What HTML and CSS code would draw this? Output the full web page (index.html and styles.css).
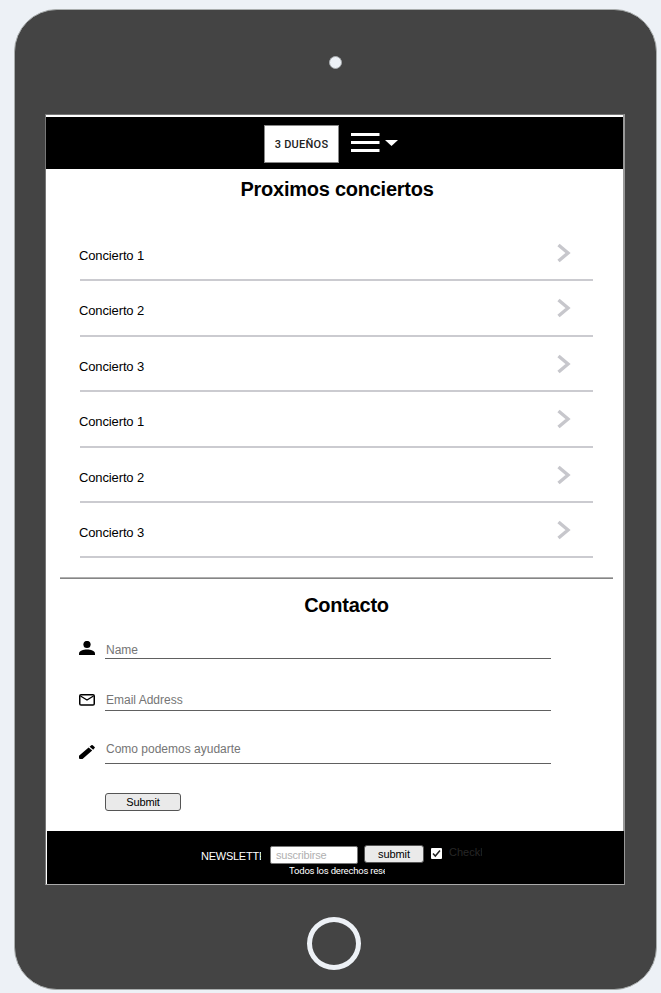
FILE: index.html
```html
<!DOCTYPE html>
<html lang="es">
<head>
<meta charset="utf-8">
<title>3 Dueños</title>
<link rel="stylesheet" href="styles.css">
</head>
<body>
<div class="tablet">
  <div class="bezel-top"><span class="camera"></span></div>
  <main class="screen">
    <header class="topbar">
      <span class="logo">3 DUEÑOS</span>
      <svg class="menu" width="48" height="20" viewBox="0 0 48 20"><path d="M0 1.500h28.500M0 9.500h28.500M0 17.500h28.500" stroke="#fff" stroke-width="3"/><path d="M34 7h13l-6.500 6z" fill="#fff"/></svg>
    </header>
    <section class="concerts">
      <h2>Proximos conciertos</h2>
      <ul class="list">
        <li><span>Concierto 1</span><svg class="chevron" viewBox="0 0 14 20"><path d="M1.5 2l9.5 8-9.5 8"/></svg></li>
        <li><span>Concierto 2</span><svg class="chevron" viewBox="0 0 14 20"><path d="M1.5 2l9.5 8-9.5 8"/></svg></li>
        <li><span>Concierto 3</span><svg class="chevron" viewBox="0 0 14 20"><path d="M1.5 2l9.5 8-9.5 8"/></svg></li>
        <li><span>Concierto 1</span><svg class="chevron" viewBox="0 0 14 20"><path d="M1.5 2l9.5 8-9.5 8"/></svg></li>
        <li><span>Concierto 2</span><svg class="chevron" viewBox="0 0 14 20"><path d="M1.5 2l9.5 8-9.5 8"/></svg></li>
        <li><span>Concierto 3</span><svg class="chevron" viewBox="0 0 14 20"><path d="M1.5 2l9.5 8-9.5 8"/></svg></li>
      </ul>
    </section>
    <section class="contact">
      <h2>Contacto</h2>
      <div class="field name">
        <svg width="16" height="14" viewBox="0 0 16 14"><circle cx="8" cy="3.5" r="3.6"/><path d="M0 14v-1.5C0 9.900 4.500 8.500 8 8.500s8 1.400 8 4V14z"/></svg>
        <span>Name</span>
      </div>
      <div class="field email">
        <svg width="16" height="12" viewBox="0 0 16 12"><rect x=".75" y=".75" width="14.500" height="10.200" rx="1.300" fill="none" stroke="#000" stroke-width="1.500"/><path d="M1.500 2L8 6l6.500-4" fill="none" stroke="#000" stroke-width="1.300"/></svg>
        <span>Email Address</span>
      </div>
      <div class="field message">
        <svg width="16" height="14" viewBox="0 0 16 14"><path d="M0 10.800L9.600 2.400l3.600 3.100L3.500 14H1Q0 14 0 13zM10.600 1.700L12.300.3Q13 -.2 13.700.3l1.900 1.600q.6.600 0 1.200L14.200 4.700z"/></svg>
        <span>Como podemos ayudarte</span>
      </div>
      <button class="send">Submit</button>
    </section>
    <footer class="footer">
      <div class="newsletter">
        <span class="news-label">NEWSLETTER</span>
        <span class="news-input">suscribirse</span>
        <button class="news-button">submit</button>
        <span class="check"><svg width="9" height="9" viewBox="0 0 9 9"><path d="M1 4.500l2.300 2.500L8 1.500" fill="none" stroke="#222" stroke-width="1.500"/></svg></span>
        <span class="check-label">Checkbox</span>
      </div>
      <p class="rights">Todos los derechos reservados</p>
    </footer>
  </main>
  <div class="bezel-bottom"><span class="home"></span></div>
</div>
</body>
</html>
```
FILE: styles.css
```css
* { box-sizing: border-box; }
html, body { height: 100%; overflow: hidden; }
body {
  margin: 0;
  padding: 9px 0 0 14px;
  background: #edf1f6;
  font-family: "Liberation Sans", Arial, sans-serif;
  color: #000;
}
.tablet {
  width: 643px;
  height: 981px;
  border: 1px solid #a9adad;
  border-radius: 43px;
  background: #444;
}
.bezel-top {
  height: 104px;
  padding: 46px 0 0 314px;
}
.camera {
  display: block;
  width: 13px;
  height: 13px;
  border: 1px solid #a9adb0;
  border-radius: 50%;
  background: #edf1f6;
}
.screen {
  display: flex;
  flex-direction: column;
  width: 580px;
  height: 771px;
  margin-left: 30px;
  border: 1px solid #777;
  border-right: 2px solid #999;
  border-bottom-color: #aaa;
  background: #fff;
}
.topbar {
  display: flex;
  height: 52px;
  margin-top: 2px;
  padding: 8px 0 0 218px;
  background: #000;
}
.logo {
  width: 75px;
  height: 38px;
  background: #fff;
  border: 1px solid #888;
  font: 500 11px/37px Roboto, sans-serif;
  letter-spacing: .25px;
  text-align: center;
  color: #222;
}
.menu { margin: 8px 0 0 12px; }
h2 {
  margin: 0;
  font-size: 20px;
  line-height: 24px;
  font-weight: bold;
  letter-spacing: -.25px;
  text-align: center;
}
.concerts { height: 408px; padding-top: 8px; }
.concerts h2 { padding-left: 5px; }
.list {
  list-style: none;
  margin: 25px 30px 0 34px;
  padding: 0;
}
.list li {
  display: flex;
  justify-content: space-between;
  height: 55.4px;
  padding: 18px 22px 0 0;
  border-bottom: 2px solid #cbcbd0;
  font-size: 13px;
  line-height: 24px;
  letter-spacing: -.13px;
}
.list span { margin-left: -1px; }
.chevron { width: 14px; height: 20px; margin-top: -1px; }
.chevron path { fill: none; stroke: #c7c7cc; stroke-width: 3.4; }
.contact {
  height: 254px;
  margin: 0 10px 0 14px;
  padding-top: 15px;
  border-top: 1px solid #b0b0b0;
  box-shadow: inset 0 1px #858585;
}
.contact h2 { padding-left: 20px; }
.field {
  display: flex;
  align-items: flex-start;
  margin-left: 19px;
  font-size: 12px;
  line-height: 16px;
  color: #757575;
}
.field svg { flex: none; }
.field span {
  width: 446px;
  margin-left: 10px;
  padding-left: 1px;
  border-bottom: 1px solid #606060;
}
.name { margin-top: 24px; }
.name span { height: 18px; padding-top: 1px; }
.email { margin-top: 33px; }
.email svg { margin-top: 2px; }
.email span { height: 19px; }
.message { margin-top: 30px; }
.message svg { margin-top: 4px; }
.message span { height: 23px; }
button {
  padding: 0;
  border: 1px solid #555;
  border-radius: 3px;
  background: #eaeaea;
  color: #000;
  font: 11px/14px "Liberation Sans", Arial, sans-serif;
}
.send {
  display: block;
  width: 76px;
  height: 18px;
  margin: 29px 0 0 45px;
  letter-spacing: -.1px;
}
.footer {
  flex: 1;
  margin: 0 -1px 0 1px;
  background: #000;
  color: #fff;
}
.newsletter {
  display: flex;
  height: 35px;
  padding: 14px 0 0 154px;
}
.news-label {
  width: 60px;
  margin-top: 4px;
  overflow: hidden;
  font-size: 11px;
  line-height: 15px;
  letter-spacing: -.25px;
}
.news-input {
  width: 88px;
  height: 18px;
  margin: 1px 0 0 9px;
  padding-left: 5px;
  border: 1px solid #777;
  border-radius: 2px;
  background: #fff;
  color: #b0b0b0;
  font-size: 11px;
  line-height: 17px;
  letter-spacing: -.2px;
}
.news-button { width: 60px; height: 18px; margin-left: 6px; letter-spacing: -.1px; }
.check {
  width: 11px;
  height: 11px;
  margin: 3px 0 0 7px;
  padding: 1px;
  border-radius: 1px;
  background: #fff;
}
.check svg { display: block; }
.check-label {
  width: 33px;
  margin-left: 7px;
  overflow: hidden;
  color: #272727;
  font-size: 11px;
  line-height: 15px;
}
.rights {
  width: 96px;
  margin: -1px 0 0 242px;
  overflow: hidden;
  white-space: nowrap;
  font: 9.500px/12px Roboto, sans-serif;
  letter-spacing: -.2px;
}
.bezel-bottom { padding: 32px 0 0 292px; }
.home {
  display: block;
  width: 54px;
  height: 53px;
  border: 5px solid #edf1f6;
  border-radius: 50%;
}
```
